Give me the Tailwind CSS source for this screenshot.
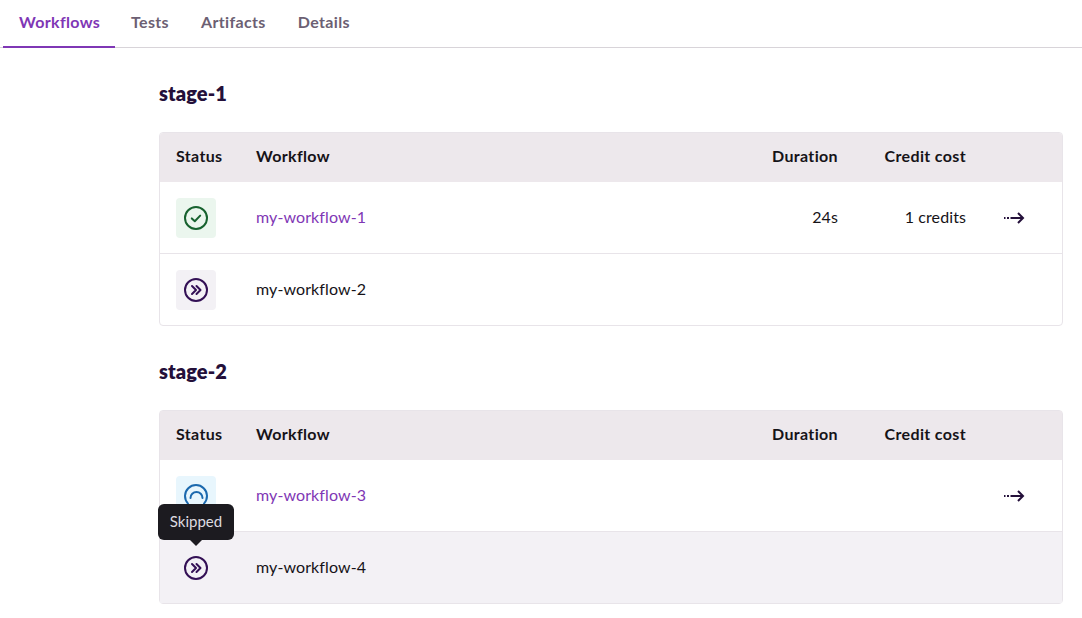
<!DOCTYPE html>
<html lang="en">
<head>
    <meta charset="UTF-8">
    <meta name="viewport" content="width=device-width, initial-scale=1.0">
    <title>Workflows</title>
    <script src="https://cdn.jsdelivr.net/npm/@tailwindcss/browser@4"></script>
</head>
<body class="bg-white font-['Lato',sans-serif] text-[16px] text-[#161318] overflow-hidden">

    <!-- Tabs -->
    <nav class="flex h-[48px] pl-[3px] border-b border-[#d8d4d9] font-bold text-[16px] tracking-[0.35px] text-[#6c5f73]">
        <a class="w-[112px] h-[48px] px-4 pt-[10px] border-b-2 border-[#7f37b5] text-[#7f37b5] whitespace-nowrap">Workflows</a>
        <a class="px-4 pt-[10px]">Tests</a>
        <a class="px-4 pt-[10px]">Artifacts</a>
        <a class="px-4 pt-[10px]">Details</a>
    </nav>

    <main class="ml-[159px] w-[904px]">
        <!-- stage-1 -->
        <h2 class="h-[84px] pt-[33px] font-extrabold text-[20px] leading-[24px] tracking-[0.1px] text-[#24103a]">stage-1</h2>
        <div class="border border-[#e8e4e9] rounded-[4px] overflow-hidden">
            <table class="w-full table-fixed border-collapse tracking-[0.1px]">
                <colgroup>
                    <col class="w-[80px]"><col class="w-[486px]"><col class="w-[128px]"><col class="w-[128px]"><col class="w-[80px]">
                </colgroup>
                <thead class="bg-[#ede8ec] tracking-[0.35px]">
                    <tr class="h-[49px]">
                        <th class="px-4 pb-[4px] text-left font-bold">Status</th>
                        <th class="px-4 pb-[4px] text-left font-bold">Workflow</th>
                        <th class="px-4 pb-[4px] text-right font-bold">Duration</th>
                        <th class="px-4 pb-[4px] text-right font-bold whitespace-nowrap">Credit cost</th>
                        <th></th>
                    </tr>
                </thead>
                <tbody>
                    <tr class="h-[71px] border-b border-[#e8e4e9]">
                        <td class="px-4 pt-[2px]">
                            <div class="flex items-center justify-center w-10 h-10 rounded-[4px] bg-[#ebf6ee]">
                                <svg width="26" height="26" viewBox="0 0 26 26" fill="none" stroke="#17622f" stroke-width="2" stroke-linecap="round" stroke-linejoin="round"><circle cx="13" cy="13" r="11"/><path d="M8.800 13.400l3 2.800 5.400-5.600"/></svg>
                            </div>
                        </td>
                        <td class="px-4"><a class="text-[#7f37b5]">my-workflow-1</a></td>
                        <td class="px-4 text-right">24s</td>
                        <td class="px-4 text-right whitespace-nowrap">1 credits</td>
                        <td class="pl-[21px] pt-[2px]">
                            <svg class="block" width="22" height="14" viewBox="0 0 22 14" fill="none" stroke="#24103a" stroke-width="2"><path d="M1 7h1.500M4 7h2M7.500 7H20"/><path d="M15 2l5 5-5 5"/></svg>
                        </td>
                    </tr>
                    <tr class="h-[72px]">
                        <td class="px-4 pt-[2px]">
                            <div class="flex items-center justify-center w-10 h-10 rounded-[4px] bg-[#f3f1f5]">
                                <svg width="26" height="26" viewBox="0 0 26 26" fill="none" stroke="#331055" stroke-width="2" stroke-linecap="round" stroke-linejoin="round"><circle cx="13" cy="13" r="11"/><path d="M9 9l4 4-4 4M13.500 9l4 4-4 4"/></svg>
                            </div>
                        </td>
                        <td class="px-4">my-workflow-2</td>
                        <td></td><td></td><td></td>
                    </tr>
                </tbody>
            </table>
        </div>

        <!-- stage-2 -->
        <h2 class="h-[84px] pt-[33px] font-extrabold text-[20px] leading-[24px] tracking-[0.1px] text-[#24103a]">stage-2</h2>
        <div class="border border-[#e8e4e9] rounded-[4px]">
            <table class="w-full table-fixed border-collapse tracking-[0.1px]">
                <colgroup>
                    <col class="w-[80px]"><col class="w-[486px]"><col class="w-[128px]"><col class="w-[128px]"><col class="w-[80px]">
                </colgroup>
                <thead class="bg-[#ede8ec] tracking-[0.35px]">
                    <tr class="h-[49px]">
                        <th class="px-4 pb-[4px] text-left font-bold">Status</th>
                        <th class="px-4 pb-[4px] text-left font-bold">Workflow</th>
                        <th class="px-4 pb-[4px] text-right font-bold">Duration</th>
                        <th class="px-4 pb-[4px] text-right font-bold whitespace-nowrap">Credit cost</th>
                        <th></th>
                    </tr>
                </thead>
                <tbody>
                    <tr class="h-[71px] border-b border-[#e8e4e9]">
                        <td class="px-4 pt-[2px]">
                            <div class="flex items-center justify-center w-10 h-10 rounded-[4px] bg-[#e8f6fd]">
                                <svg width="26" height="26" viewBox="0 0 26 26" fill="none" stroke="#1c69ae" stroke-width="2" stroke-linecap="round"><path d="M5 20.600A11 11 0 1 1 21 20.600"/><path d="M7.500 15A6 6 0 0 1 19.500 15"/></svg>
                            </div>
                        </td>
                        <td class="px-4"><a class="text-[#7f37b5]">my-workflow-3</a></td>
                        <td></td><td></td>
                        <td class="pl-[21px] pt-[2px]">
                            <svg class="block" width="22" height="14" viewBox="0 0 22 14" fill="none" stroke="#24103a" stroke-width="2"><path d="M1 7h1.500M4 7h2M7.500 7H20"/><path d="M15 2l5 5-5 5"/></svg>
                        </td>
                    </tr>
                    <tr class="h-[72px] bg-[#f3f1f5]">
                        <td class="relative px-4 pt-[2px]">
                            <div class="flex items-center justify-center w-10 h-10">
                                <svg width="26" height="26" viewBox="0 0 26 26" fill="none" stroke="#331055" stroke-width="2" stroke-linecap="round" stroke-linejoin="round"><circle cx="13" cy="13" r="11"/><path d="M9 9l4 4-4 4M13.500 9l4 4-4 4"/></svg>
                            </div>
                            <!-- Tooltip -->
                            <div class="absolute left-[-2px] top-[-28px] flex items-center justify-center w-[76px] h-[36px] rounded-[6px] bg-[#1c1b20] text-[15px] tracking-normal text-[#dedbe0]">
                                Skipped
                                <span class="absolute left-[32px] bottom-[-6px] w-0 h-0 border-x-[6px] border-x-transparent border-t-[6px] border-t-[#1c1b20]"></span>
                            </div>
                        </td>
                        <td class="px-4">my-workflow-4</td>
                        <td></td><td></td><td></td>
                    </tr>
                </tbody>
            </table>
        </div>
    </main>
</body>
</html>
